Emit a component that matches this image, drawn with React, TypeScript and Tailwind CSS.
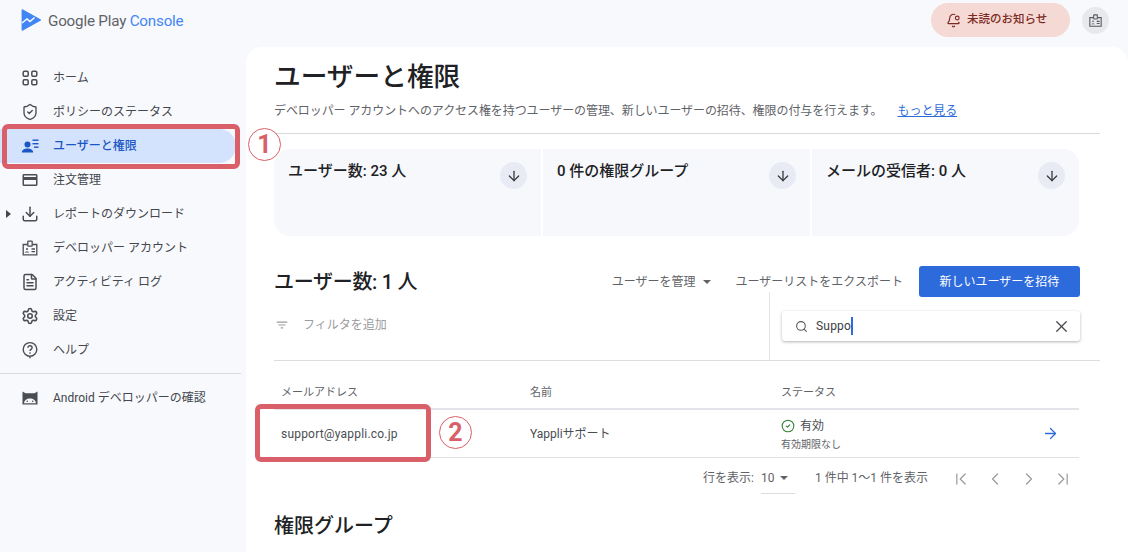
import { ArrowDown, ArrowRight, BellDot, CheckCircle2, ChevronFirst, ChevronLast, ChevronLeft, ChevronRight, Download, FileText, Search, Settings, ShieldCheck, X } from "lucide-react";
import type { ReactNode } from "react";

const icon = "w-[18px] h-[18px] text-[#4a4d52]";

const HomeIcon = () => (
  <svg viewBox="0 0 18 18" className={icon} fill="none" stroke="currentColor" strokeWidth="1.5">
    <rect x="2.2" y="2.2" width="5" height="5" rx="1.2" />
    <rect x="10.8" y="2.2" width="5" height="5" rx="1.2" />
    <rect x="2.2" y="10.8" width="5" height="5" rx="1.2" />
    <rect x="10.8" y="10.8" width="5" height="5" rx="1.2" />
  </svg>
);

const UsersIcon = () => (
  <svg viewBox="0 0 18 18" className="w-[18px] h-[18px] text-[#1a56c4]" fill="currentColor">
    <circle cx="6.5" cy="7.5" r="3" />
    <path d="M0.8 15.5c0-2.6 3-4 5.7-4s5.7 1.4 5.7 4z" />
    <rect x="11.5" y="2.5" width="6" height="1.4" />
    <rect x="11.5" y="6" width="6" height="1.4" />
    <rect x="13" y="9.5" width="4.5" height="1.4" />
  </svg>
);

const CardIcon = () => (
  <svg viewBox="0 0 24 24" className={icon} fill="currentColor">
    <path d="M20 4H4c-1.11 0-1.99.89-1.99 2L2 18c0 1.11.89 2 2 2h16c1.11 0 2-.89 2-2V6c0-1.11-.89-2-2-2zm0 14H4v-6h16v6zm0-10H4V6h16v2z" />
  </svg>
);

const BadgeIcon = ({ className = icon }: { className?: string }) => (
  <svg viewBox="0 0 18 18" className={className} fill="none" stroke="currentColor" strokeWidth="1.3">
    <path d="M6.5 5.5H2.2v10.3h13.6V5.5h-4.3" />
    <rect x="6.8" y="2.2" width="4.4" height="5" rx="0.6" />
    <circle cx="6" cy="10" r="1" fill="currentColor" stroke="none" />
    <path d="M3.8 13.4c0-1.2 4.4-1.2 4.4 0z" fill="currentColor" stroke="none" />
    <path d="M10.5 10h3.5M10.5 12.6h3.5" />
  </svg>
);

const HelpIcon = () => (
  <svg viewBox="0 0 18 18" className={icon} fill="none" stroke="currentColor" strokeWidth="1.4">
    <path d="M9 15.2A6.8 6.8 0 1 1 9 1.6a6.8 6.8 0 0 1 0 13.6zM9 15.2v2" />
    <path d="M6.9 6.8A2.1 2.1 0 0 1 11.1 6.8c0 1.5-2.1 1.6-2.1 3.2" />
    <circle cx="9" cy="12.1" r="0.8" fill="currentColor" stroke="none" />
  </svg>
);

const AndroidIcon = () => (
  <svg viewBox="0 0 18 18" className={icon} fill="currentColor">
    <path fillRule="evenodd" d="M1.500 2.500 4.500 4.200h9l3-1.700v13h-15zM3 14.200c.2-2.800 2.800-4.700 6-4.700s5.800 1.900 6 4.700z" />
    <circle cx="6.300" cy="12.300" r="0.8" />
    <circle cx="11.700" cy="12.300" r="0.8" />
  </svg>
);

const nav: { label: string; icon: ReactNode; caret?: boolean; active?: boolean }[] = [
  { label: "ホーム", icon: <HomeIcon /> },
  { label: "ポリシーのステータス", icon: <ShieldCheck className={icon} strokeWidth={1.8} /> },
  { label: "ユーザーと権限", icon: <UsersIcon />, active: true },
  { label: "注文管理", icon: <CardIcon /> },
  { label: "レポートのダウンロード", icon: <Download className={icon} strokeWidth={2} />, caret: true },
  { label: "デベロッパー アカウント", icon: <BadgeIcon /> },
  { label: "アクティビティ ログ", icon: <FileText className={icon} strokeWidth={2} /> },
  { label: "設定", icon: <Settings className={icon} strokeWidth={2.1} /> },
  { label: "ヘルプ", icon: <HelpIcon /> },
];

function NavRow({ label, icon, caret, active }: { label: string; icon: ReactNode; caret?: boolean; active?: boolean }) {
  return (
    <div className={`relative flex items-center h-[34px] pl-[21px] mr-[10px] rounded-r-[17px] ${active ? "bg-[#d3e3fd] text-[#1a56c4] font-medium" : "text-[#44474c]"}`}>
      {caret && <span className="absolute left-[6px] top-[13px] w-0 h-0 border-y-[4px] border-y-transparent border-l-[5px] border-l-[#44474c]" />}
      <span className="w-[32px] flex items-center">{icon}</span>
      <span className="text-[12px] whitespace-nowrap">{label}</span>
    </div>
  );
}

function StatCard({ title, rounded }: { title: string; rounded: string }) {
  return (
    <div className={`flex justify-between bg-[#f7f8fc] pl-[14px] pr-[14px] pt-[13px] ${rounded}`}>
      <span className="text-[15px] leading-[18px] font-medium text-[#202124]">{title}</span>
      <span className="w-[27px] h-[27px] rounded-full bg-[#e8ebf3] flex items-center justify-center">
        <ArrowDown className="w-[16px] h-[16px] text-[#33363b]" strokeWidth={1.9} />
      </span>
    </div>
  );
}

function Marker({ n, className }: { n: string; className: string }) {
  return (
    <div className={`absolute w-[33px] h-[33px] rounded-full border border-[#d95f69] bg-white text-[#d95f69] text-[25px] font-bold flex items-center justify-center ${className}`}>
      {n}
    </div>
  );
}

export default function App() {
  return (
    <div className="relative w-[1128px] h-[552px] overflow-hidden bg-[#f8f9fd] font-['Roboto','Noto_Sans_CJK_JP',sans-serif]">
      {/* ヘッダー */}
      <header className="flex items-center justify-between h-[47px] pl-[21px] pr-[19px]">
        <div className="flex items-center gap-[7px] mt-[-6px]">
          <svg viewBox="0 0 20 22" className="w-[20px] h-[22px]">
            <path d="M1.500 1.200 19 11 1.500 20.800z" fill="#4285f4" strokeLinejoin="round" stroke="#4285f4" strokeWidth="1.800" />
            <path d="M1 14 6 10l3 2.500 4.500-4" fill="none" stroke="#fff" strokeWidth="1.400" />
          </svg>
          <span className="text-[15.200px] tracking-[-0.2px] text-[#5f6368] mt-[1px]">
            Google Play <span className="text-[#4285f4]">Console</span>
          </span>
        </div>
        <div className="flex items-center gap-[12px] mt-[-7px]">
          <div className="flex items-center gap-[6px] h-[34px] w-[139px] pl-[15px] rounded-full bg-[#f5d9d5] text-[#7c2a22]">
            <BellDot className="w-[15px] h-[15px]" strokeWidth={1.8} />
            <span className="text-[11.500px] font-medium">未読のお知らせ</span>
          </div>
          <div className="w-[27px] h-[27px] rounded-full bg-[#e8e9ed] flex items-center justify-center">
            <BadgeIcon className="w-[15px] h-[15px] text-[#55585d]" />
          </div>
        </div>
      </header>

      <div className="flex">
        {/* サイドバー */}
        <aside className="w-[246px] shrink-0 pt-[14px]">
          {nav.map((item) => (
            <NavRow key={item.label} {...item} />
          ))}
          <div className="h-px bg-[#d9dadf] mt-[6px] mr-[5px]" />
          <div className="mt-[7px]">
            <NavRow label="Android デベロッパーの確認" icon={<AndroidIcon />} />
          </div>
        </aside>

        {/* メイン */}
        <main className="flex-1 h-[505px] bg-white rounded-t-[16px] pl-[28px] pr-[28px]">
          <h1 className="text-[26.700px] leading-[36px] font-medium text-[#202124] mt-[12px]">ユーザーと権限</h1>
          <p className="flex items-center text-[12px] leading-[18px] text-[#5f6368] mt-[7px] whitespace-nowrap tracking-[-0.08px]">
            デベロッパー アカウントへのアクセス権を持つユーザーの管理、新しいユーザーの招待、権限の付与を行えます。
            <a className="ml-[15px] text-[#2d6bdd] underline">もっと見る</a>
          </p>
          <div className="h-px bg-[#d9dadc] mt-[13px]" />

          <div className="grid grid-cols-3 gap-[2px] w-[805px] h-[87px] mt-[15px]">
            <StatCard title="ユーザー数: 23 人" rounded="rounded-l-[16px]" />
            <StatCard title="0 件の権限グループ" rounded="" />
            <StatCard title="メールの受信者: 0 人" rounded="rounded-r-[16px]" />
          </div>

          <div className="flex items-center justify-between w-[806px] h-[31px] mt-[30px]">
            <h2 className="text-[20px] font-medium text-[#202124] tracking-[-0.3px]">ユーザー数: 1 人</h2>
            <div className="flex items-center text-[12px] text-[#5f6368]">
              <span>ユーザーを管理</span>
              <span className="ml-[7px] w-0 h-0 border-x-[4px] border-x-transparent border-t-[4px] border-t-[#5f6368]" />
              <span className="ml-[25px]">ユーザーリストをエクスポート</span>
              <button className="ml-[16px] w-[161px] h-[31px] rounded-[3px] bg-[#2d6bdd] text-white text-[12px]">新しいユーザーを招待</button>
            </div>
          </div>

          <div className="flex h-[64px] border-b border-[#dcdde0]">
            <div className="w-[496px] flex items-center pl-[1px] pb-[8px] text-[#9a9ca0] border-r border-[#e3e4e8] mt-[-5px] h-[68px]">
              <svg viewBox="0 0 24 24" className="w-[14px] h-[14px] mt-[5px]" fill="currentColor">
                <path d="M10 18h4v-2h-4v2zM3 6v2h18V6H3zm3 7h12v-2H6v2z" />
              </svg>
              <span className="ml-[14px] text-[12px] mt-[5px]">フィルタを追加</span>
            </div>
            <div className="ml-[12px] mt-[14px] w-[298px] h-[30px] rounded-[3px] bg-white shadow-[0_1px_3px_rgba(60,64,67,0.4)] flex items-center pl-[13px] pr-[9px]">
              <Search className="w-[13px] h-[13px] text-[#55585d]" strokeWidth={2} />
              <span className="ml-[8px] text-[12px] text-[#3c4043] border-r-2 border-[#2d6bdd] leading-[18px] tracking-[0.2px]">Suppo</span>
              <X className="ml-auto w-[19px] h-[19px] text-[#44474c]" strokeWidth={1.6} />
            </div>
          </div>

          {/* テーブル */}
          <div className="w-[805px]">
            <div className="grid grid-cols-[249px_251px_1fr] h-[49px] pt-[24px] pl-[7px] text-[11px] leading-[16px] text-[#5f6368] border-b-2 border-[#e3e4ea]">
              <span>メールアドレス</span>
              <span>名前</span>
              <span>ステータス</span>
            </div>
            <div className="grid grid-cols-[249px_251px_1fr] items-center h-[48px] pl-[7px] text-[12px] text-[#4a4d52] border-b border-[#e0e1e6]">
              <span className="tracking-[0.2px]">support@yappli.co.jp</span>
              <span>Yappliサポート</span>
              <div className="flex items-center justify-between pr-[20px]">
                <div className="pt-[2px]">
                  <div className="flex items-center gap-[5px] leading-[16px] mb-[4px]">
                    <CheckCircle2 className="w-[14px] h-[14px] text-[#2e7d32]" strokeWidth={1.8} />
                    <span>有効</span>
                  </div>
                  <div className="text-[10px] leading-[14px] text-[#5f6368]">有効期限なし</div>
                </div>
                <ArrowRight className="w-[17px] h-[17px] text-[#2d6bdd]" strokeWidth={1.8} />
              </div>
            </div>
            <div className="flex items-start h-[36px] pt-[11px] pl-[429px] text-[12px] leading-[18px] text-[#5f6368]">
              <span>行を表示:</span>
              <span className="ml-[7px] w-[34px] h-[25px] border-b border-[#dcdde0] flex items-start gap-[6px]">
                10
                <span className="mt-[7px] w-0 h-0 border-x-[4px] border-x-transparent border-t-[4px] border-t-[#5f6368]" />
              </span>
              <span className="ml-[20px]">1 件中 1〜1 件を表示</span>
              <div className="ml-[23px] flex gap-[14px] text-[#9a9ca0]">
                <ChevronFirst className="w-[20px] h-[20px]" strokeWidth={1.5} />
                <ChevronLeft className="w-[20px] h-[20px]" strokeWidth={1.5} />
                <ChevronRight className="w-[20px] h-[20px]" strokeWidth={1.5} />
                <ChevronLast className="w-[20px] h-[20px]" strokeWidth={1.5} />
              </div>
            </div>
          </div>
          <h2 className="text-[20px] leading-[28px] font-medium text-[#202124] mt-[18px]">権限グループ</h2>
        </main>
      </div>

      {/* 注釈 */}
      <div className="absolute left-[2px] top-[124px] w-[238px] h-[45px] border-[5px] border-[#d95f69] rounded-[6px]" />
      <Marker n="1" className="left-[248px] top-[128px]" />
      <div className="absolute left-[255px] top-[404px] w-[176px] h-[58px] border-[5px] border-[#d95f69] rounded-[6px]" />
      <Marker n="2" className="left-[439px] top-[416px]" />
    </div>
  );
}
